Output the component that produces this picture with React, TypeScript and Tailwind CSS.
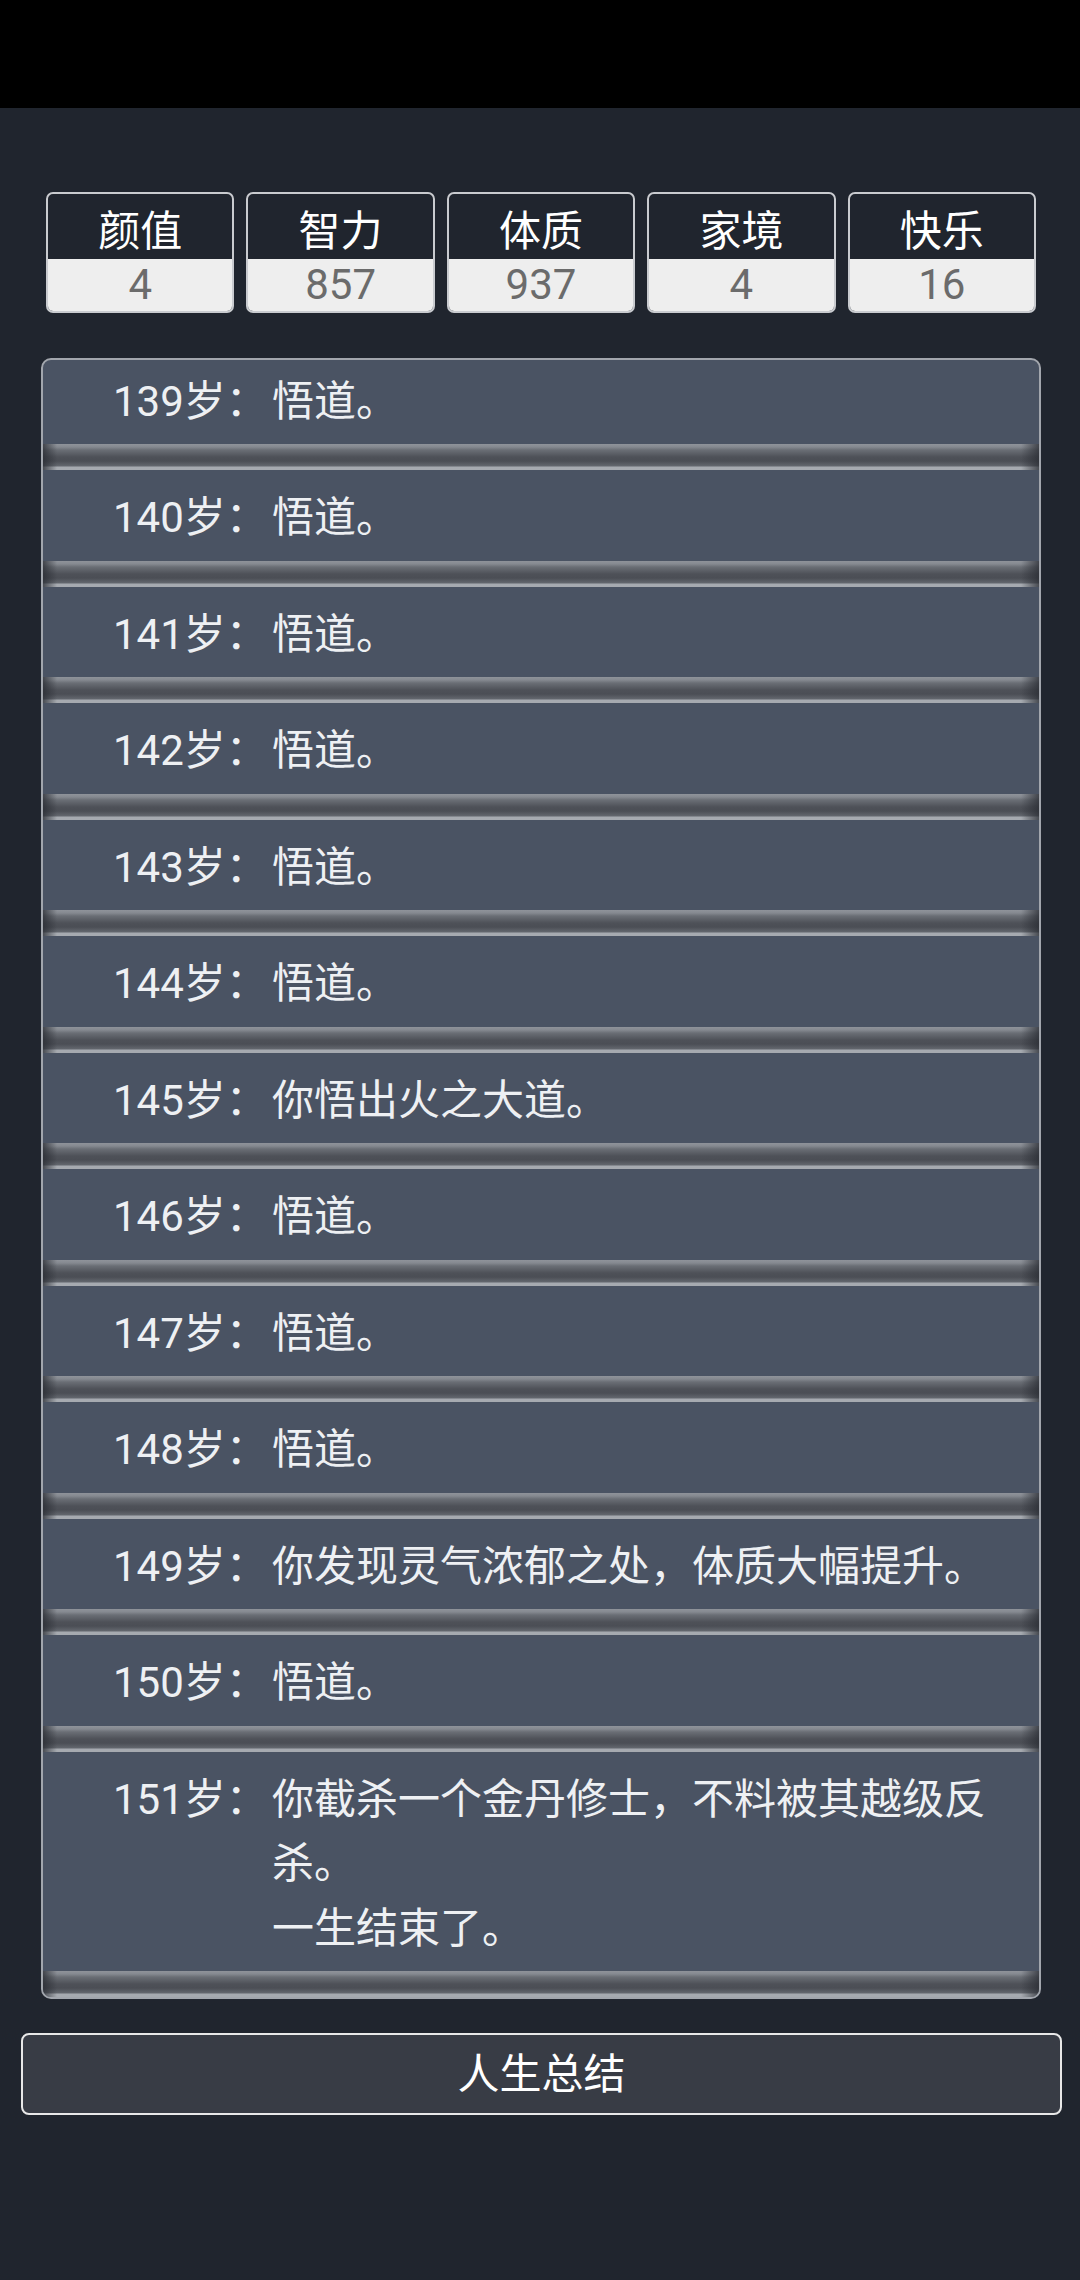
import React from "react";

const stats = [
  { label: "颜值", value: "4" },
  { label: "智力", value: "857" },
  { label: "体质", value: "937" },
  { label: "家境", value: "4" },
  { label: "快乐", value: "16" },
];

const events: { age: number; lines: string[] }[] = [
  { age: 139, lines: ["悟道。"] },
  { age: 140, lines: ["悟道。"] },
  { age: 141, lines: ["悟道。"] },
  { age: 142, lines: ["悟道。"] },
  { age: 143, lines: ["悟道。"] },
  { age: 144, lines: ["悟道。"] },
  { age: 145, lines: ["你悟出火之大道。"] },
  { age: 146, lines: ["悟道。"] },
  { age: 147, lines: ["悟道。"] },
  { age: 148, lines: ["悟道。"] },
  { age: 149, lines: ["你发现灵气浓郁之处，体质大幅提升。"] },
  { age: 150, lines: ["悟道。"] },
  { age: 151, lines: ["你截杀一个金丹修士，不料被其越级反杀。", "一生结束了。"] },
];

function Separator() {
  return (
    <div className="h-[26px] bg-[linear-gradient(to_bottom,#8f939a_0px,#858990_3px,#6a6e75_6px,#4e5158_13px,#4b4e55_17px,#63676e_22px,#a6aab0_23px,#a6aab0_26px)]">
      <div className="h-full bg-[linear-gradient(to_right,rgba(40,43,50,0.75)_0px,rgba(40,43,50,0)_14px,rgba(40,43,50,0)_calc(100%-18px),rgba(40,43,50,0.75)_100%)]" />
    </div>
  );
}

export default function App() {
  return (
    <div
      className="w-[1080px] min-h-[2280px] bg-[#20252e] flex flex-col"
      style={{ fontFamily: 'Roboto, "Noto Sans CJK SC", "Noto Sans", sans-serif' }}
    >
      <div className="h-[108px] bg-black shrink-0" />

      <div className="mt-[84px] ml-[46px] mr-[44px] grid grid-cols-5 gap-[12px]">
        {stats.map((s) => (
          <div
            key={s.label}
            className="h-[121px] border-2 border-[#c9cbcf] rounded-[7px] overflow-hidden flex flex-col"
          >
            <div className="h-[65px] flex items-center justify-center text-white text-[42px] leading-none pt-[10px]">
              {s.label}
            </div>
            <div className="flex-1 bg-[#eeeeee] text-[#6b6b6b] text-[42px] leading-none flex items-center justify-center">
              {s.value}
            </div>
          </div>
        ))}
      </div>

      <div className="mt-[45px] ml-[41px] mr-[39px] border-2 border-[#a2a6ad] rounded-[10px] bg-[#4a5363] overflow-hidden">
        <div className="-mt-[6.5px]">
          {events.map((e) => (
            <div key={e.age}>
              <div className="flex pt-[16px] pb-[10px] pl-[70px] pr-[28px] text-[#eef0f3] text-[42px] leading-[64.5px]">
                <div className="w-[159px] shrink-0">{e.age}岁：</div>
                <div className="flex-1">
                  {e.lines.map((l, i) => (
                    <div key={i}>{l}</div>
                  ))}
                </div>
              </div>
              <Separator />
            </div>
          ))}
        </div>
      </div>

      <div className="mt-[34px] ml-[21px] mr-[18px] h-[82px] border-2 border-[#e8e8e8] rounded-[8px] bg-[#383c45] flex items-center justify-center text-white text-[42px]">
        人生总结
      </div>
    </div>
  );
}
